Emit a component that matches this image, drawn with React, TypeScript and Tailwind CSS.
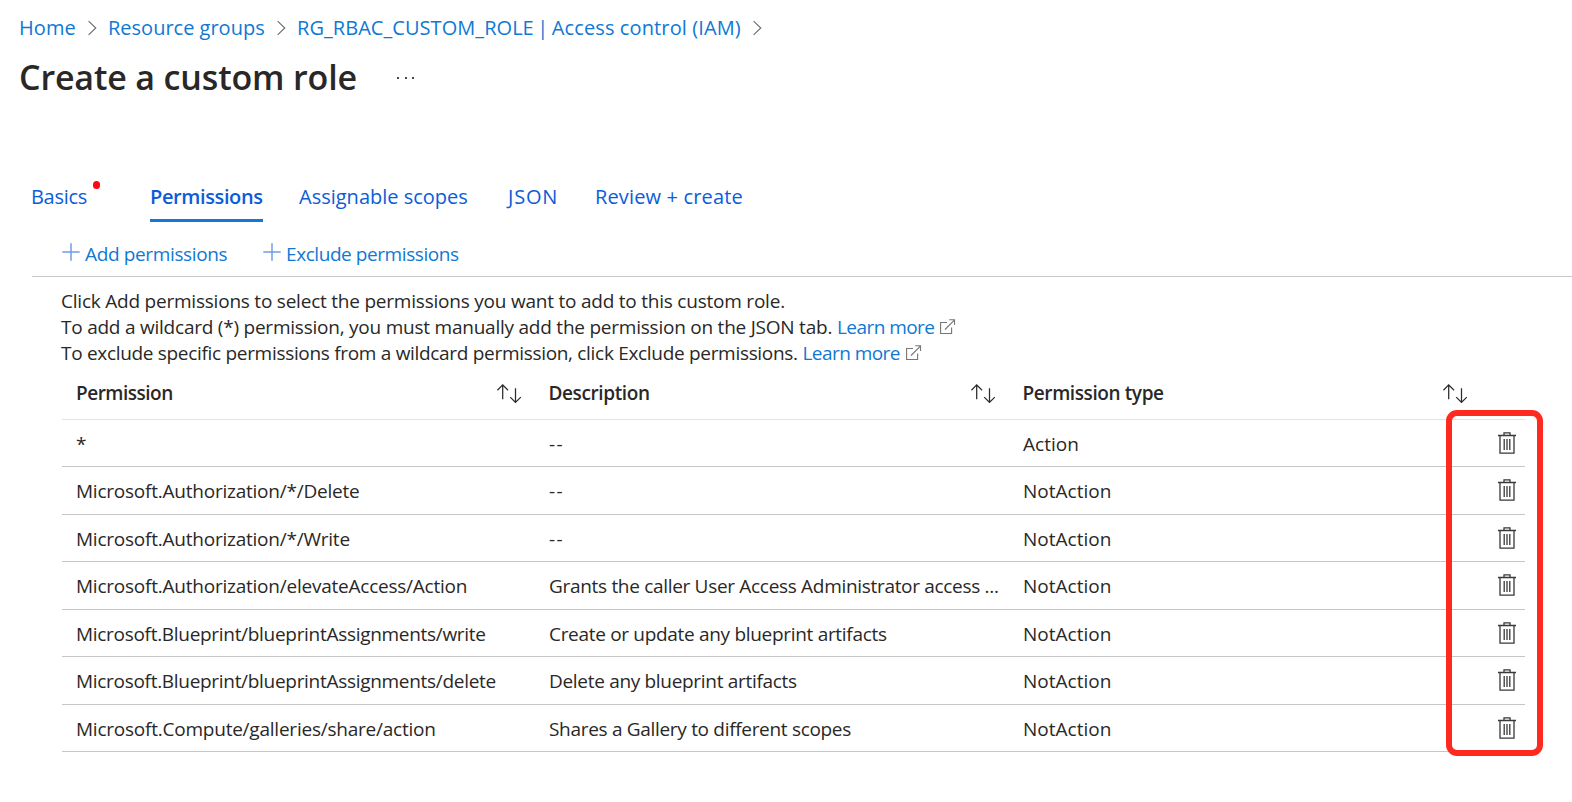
type Row = {
  permission: string;
  description: string;
  type: string;
  tight?: boolean;
};

const rows: Row[] = [
  { permission: '*', description: '--', type: 'Action' },
  { permission: 'Microsoft.Authorization/*/Delete', description: '--', type: 'NotAction' },
  { permission: 'Microsoft.Authorization/*/Write', description: '--', type: 'NotAction' },
  {
    permission: 'Microsoft.Authorization/elevateAccess/Action',
    description: 'Grants the caller User Access Administrator access ...',
    type: 'NotAction',
  },
  {
    permission: 'Microsoft.Blueprint/blueprintAssignments/write',
    description: 'Create or update any blueprint artifacts',
    type: 'NotAction',
    tight: true,
  },
  {
    permission: 'Microsoft.Blueprint/blueprintAssignments/delete',
    description: 'Delete any blueprint artifacts',
    type: 'NotAction',
    tight: true,
  },
  {
    permission: 'Microsoft.Compute/galleries/share/action',
    description: 'Shares a Gallery to different scopes',
    type: 'NotAction',
  },
];

function Chevron() {
  return (
    <svg width="10" height="16" viewBox="0 0 10 16" fill="none" stroke="#6a6a6a" strokeWidth="1.1">
      <path d="M.6 1.2 7.8 8 .6 14.8" />
    </svg>
  );
}

function Plus() {
  return (
    <svg width="18" height="18" viewBox="0 0 18 18" fill="none" stroke="#6f9de8" strokeWidth="1.5">
      <path d="M9 .3v17.4M.3 9h17.4" />
    </svg>
  );
}

function External() {
  return (
    <svg className="mt-[5px]" width="16" height="16" viewBox="0 0 16 16" fill="none" stroke="#767676" strokeWidth="1.1">
      <path d="M7 3.5H.6v11h11V8.5M5 10.5 14.4 1.1M9.2.7h5.3V6" />
    </svg>
  );
}

function SortArrows() {
  return (
    <svg width="25" height="20" viewBox="0 0 25 20" fill="none" stroke="#2b2a29" strokeWidth="1.25">
      <path d="M5.7 15.2V1M.4 6.2 5.7.9 11 6.2M18.5 4.2v14.2M13.2 13.1l5.3 5.3 5.3-5.3" />
    </svg>
  );
}

function Trash() {
  return (
    <svg width="18" height="22" viewBox="0 0 18 22" fill="none" stroke="#3a3938" strokeWidth="1.3">
      <path d="M0 3.5h18M6 3.2V.9h6v2.3M2 4v17.2h14V4" />
      <path d="M6.2 7v11M9 7v11M11.8 7v11" />
    </svg>
  );
}

export default function App() {
  return (
    <div className="relative h-[802px] w-[1572px] overflow-hidden bg-white font-['Open_Sans','Noto_Sans',sans-serif] text-[19px] whitespace-nowrap text-[#292827]">
      <nav className="flex h-[41px] items-start pt-[14px] pl-[19px] text-[20px] leading-[28px] text-[#0f78d4]">
        <a className="w-[69px] tracking-[0.1px]">Home</a>
        <span className="mt-[6px] w-[20px]"><Chevron /></span>
        <a className="w-[169px]">Resource groups</a>
        <span className="mt-[6px] w-[20px]"><Chevron /></span>
        <a className="w-[456px] tracking-[0.05px]">
          <span className="[word-spacing:-1.8px]">RG_RBAC_CUSTOM_ROLE | </span>
          <span className="tracking-[0.12px]">Access control (IAM)</span>
        </a>
        <span className="mt-[6px]"><Chevron /></span>
      </nav>

      <header className="flex h-[141px] items-start pt-[14px] pl-[19px]">
        <h1 className="w-[378px] text-[34px] leading-[44px] font-semibold tracking-[-0.15px]">Create a custom role</h1>
        <div className="mt-[22px] flex gap-[5.5px]">
          <i className="size-[2px] bg-[#4a4948]" />
          <i className="size-[2px] bg-[#4a4948]" />
          <i className="size-[2px] bg-[#4a4948]" />
        </div>
      </header>

      <div className="flex h-[40px] pl-[31px] text-[20px] leading-[30px] text-[#0b5cd9]">
        <div className="flex w-[119px]">
          <span className="tracking-[-0.3px]">Basics</span>
          <i className="-mt-px ml-[6px] h-[8px] w-[7px] rounded-full bg-[#fb0716]" />
        </div>
        <div className="mr-[36px] w-[113px] border-b-3 border-[#1478d4] font-semibold tracking-[-0.38px]">Permissions</div>
        <div className="w-[209px]">Assignable scopes</div>
        <div className="w-[87px] tracking-[0.8px]">JSON</div>
        <div className="tracking-[0.15px]">Review + create</div>
      </div>

      <div className="ml-[32px] flex h-[55px] border-b border-[#c8c8c8] pt-[18px] pl-[30px] leading-[28px] text-[#0f78d4]">
        <div className="flex w-[201px] gap-[5px]">
          <span className="mt-[3px]"><Plus /></span>
          <span className="tracking-[-0.36px]">Add permissions</span>
        </div>
        <div className="flex gap-[5px]">
          <span className="mt-[3px]"><Plus /></span>
          <span className="tracking-[-0.43px]">Exclude permissions</span>
        </div>
      </div>

      <div className="pt-[11px] pl-[61px] leading-[26px]">
        <p className="tracking-[-0.22px]">Click Add permissions to select the permissions you want to add to this custom role.</p>
        <p className="flex">
          <span className="w-[776px] tracking-[-0.23px]">
            To add a wildcard (*) permission, you must manually add the permission on the JSON tab.
          </span>
          <a className="w-[103px] tracking-[-0.55px] text-[#0f78d4]">Learn more</a>
          <External />
        </p>
        <p className="flex">
          <span className="w-[741.5px] tracking-[-0.31px]">
            To exclude specific permissions from a wildcard permission, click Exclude permissions.
          </span>
          <a className="w-[103.5px] tracking-[-0.55px] text-[#0f78d4]">Learn more</a>
          <External />
        </p>
      </div>

      <section className="ml-[62px] w-[1463px]">
        <div className="grid h-[54px] grid-cols-[473px_473.5px_1fr] border-b border-[#e2e2e2] leading-[55px] font-semibold">
          <div className="flex justify-between pr-[13px] pl-[14px] tracking-[-0.5px]">
            Permission
            <span className="mt-[18px]"><SortArrows /></span>
          </div>
          <div className="flex justify-between pr-[13px] pl-[13.5px] tracking-[-0.38px]">
            Description
            <span className="mt-[18px]"><SortArrows /></span>
          </div>
          <div className="flex justify-between pr-[57px] pl-[14px] tracking-[-0.4px]">
            Permission type
            <span className="mt-[18px]"><SortArrows /></span>
          </div>
        </div>
        {rows.map((row, index) => (
          <div
            key={row.permission}
            className={`grid grid-cols-[473px_473.5px_1fr] border-b border-[#c6c6c6] leading-[49px] ${index % 2 === 0 ? 'h-[47px]' : 'h-[48px]'}`}
          >
            <div className={`pl-[14px] ${row.tight ? 'tracking-[-0.3px]' : 'tracking-[-0.23px]'}`}>{row.permission}</div>
            <div className={`pl-[14px] ${row.description === '--' ? 'tracking-[1.3px]' : 'tracking-[-0.31px]'}`}>
              {row.description}
            </div>
            <div className="flex justify-between pr-[9px] pl-[14.5px] tracking-[0.02px]">
              {row.type}
              <span className="mt-[12px]"><Trash /></span>
            </div>
          </div>
        ))}
      </section>

      {/* Highlight drawn over the delete buttons */}
      <div className="pointer-events-none absolute top-[410px] left-[1445.5px] h-[346px] w-[97px] rounded-[11px] border-6 border-[#ff2a1f]" />
    </div>
  );
}
